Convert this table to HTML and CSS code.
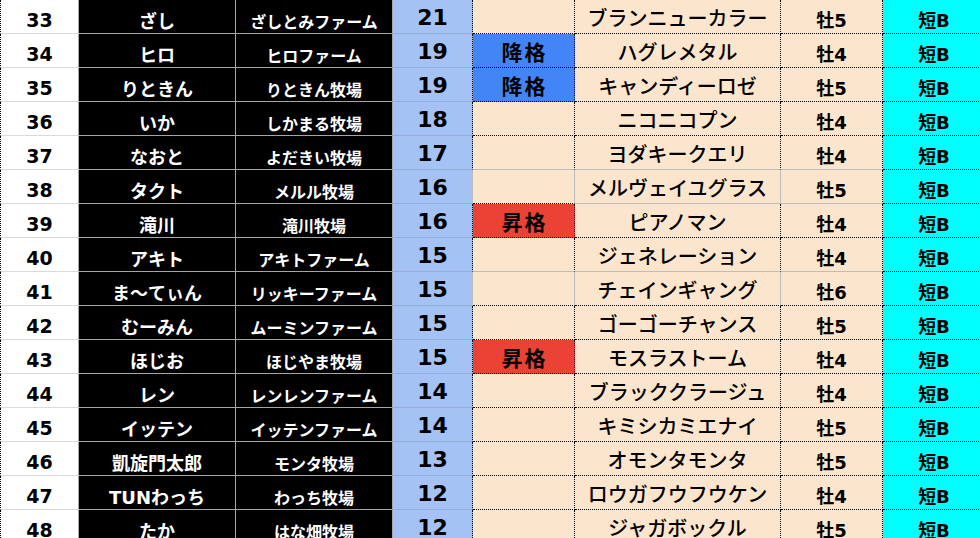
FILE: index.html
```html
<!DOCTYPE html>
<html lang="ja">
<head>
<meta charset="utf-8">
<link rel="stylesheet" href="styles.css">
</head>
<body>
<div class="sheet">
  <div class="row"><div class="c no">33</div><div class="c nm">ざし</div><div class="c fm">ざしとみファーム</div><div class="c sc">21</div><div class="c st"></div><div class="c hs">ブランニューカラー</div><div class="c sx">牡5</div><div class="c cl">短B</div></div>
  <div class="row"><div class="c no">34</div><div class="c nm">ヒロ</div><div class="c fm">ヒロファーム</div><div class="c sc">19</div><div class="c st down">降格</div><div class="c hs">ハグレメタル</div><div class="c sx">牡4</div><div class="c cl">短B</div></div>
  <div class="row"><div class="c no">35</div><div class="c nm">りときん</div><div class="c fm">りときん牧場</div><div class="c sc">19</div><div class="c st down">降格</div><div class="c hs">キャンディーロゼ</div><div class="c sx">牡5</div><div class="c cl">短B</div></div>
  <div class="row"><div class="c no">36</div><div class="c nm">いか</div><div class="c fm">しかまる牧場</div><div class="c sc">18</div><div class="c st"></div><div class="c hs">ニコニコプン</div><div class="c sx">牡4</div><div class="c cl">短B</div></div>
  <div class="row"><div class="c no">37</div><div class="c nm">なおと</div><div class="c fm">よだきい牧場</div><div class="c sc">17</div><div class="c st gb"></div><div class="c hs gb">ヨダキークエリ</div><div class="c sx gb">牡4</div><div class="c cl">短B</div></div>
  <div class="row"><div class="c no">38</div><div class="c nm">タクト</div><div class="c fm">メルル牧場</div><div class="c sc gr">16</div><div class="c st gr"></div><div class="c hs gr gb">メルヴェイユグラス</div><div class="c sx gb">牡5</div><div class="c cl">短B</div></div>
  <div class="row"><div class="c no">39</div><div class="c nm">滝川</div><div class="c fm">滝川牧場</div><div class="c sc">16</div><div class="c st up">昇格</div><div class="c hs">ピアノマン</div><div class="c sx">牡4</div><div class="c cl">短B</div></div>
  <div class="row"><div class="c no">40</div><div class="c nm">アキト</div><div class="c fm">アキトファーム</div><div class="c sc">15</div><div class="c st gb"></div><div class="c hs gb">ジェネレーション</div><div class="c sx gb">牡4</div><div class="c cl">短B</div></div>
  <div class="row"><div class="c no">41</div><div class="c nm">ま～てぃん</div><div class="c fm">リッキーファーム</div><div class="c sc gr">15</div><div class="c st gr"></div><div class="c hs gr">チェインギャング</div><div class="c sx">牡6</div><div class="c cl">短B</div></div>
  <div class="row"><div class="c no">42</div><div class="c nm">むーみん</div><div class="c fm">ムーミンファーム</div><div class="c sc">15</div><div class="c st"></div><div class="c hs">ゴーゴーチャンス</div><div class="c sx">牡5</div><div class="c cl">短B</div></div>
  <div class="row"><div class="c no">43</div><div class="c nm">ほじお</div><div class="c fm">ほじやま牧場</div><div class="c sc">15</div><div class="c st up">昇格</div><div class="c hs">モスラストーム</div><div class="c sx">牡4</div><div class="c cl">短B</div></div>
  <div class="row"><div class="c no">44</div><div class="c nm">レン</div><div class="c fm">レンレンファーム</div><div class="c sc">14</div><div class="c st"></div><div class="c hs">ブラッククラージュ</div><div class="c sx">牡4</div><div class="c cl">短B</div></div>
  <div class="row"><div class="c no">45</div><div class="c nm">イッテン</div><div class="c fm">イッテンファーム</div><div class="c sc">14</div><div class="c st"></div><div class="c hs">キミシカミエナイ</div><div class="c sx">牡5</div><div class="c cl">短B</div></div>
  <div class="row"><div class="c no">46</div><div class="c nm">凱旋門太郎</div><div class="c fm">モンタ牧場</div><div class="c sc">13</div><div class="c st"></div><div class="c hs">オモンタモンタ</div><div class="c sx">牡5</div><div class="c cl">短B</div></div>
  <div class="row"><div class="c no">47</div><div class="c nm">TUNわっち</div><div class="c fm">わっち牧場</div><div class="c sc">12</div><div class="c st"></div><div class="c hs">ロウガフウフウケン</div><div class="c sx">牡4</div><div class="c cl">短B</div></div>
  <div class="row"><div class="c no">48</div><div class="c nm">たか</div><div class="c fm">はな畑牧場</div><div class="c sc">12</div><div class="c st"></div><div class="c hs">ジャガボックル</div><div class="c sx">牡5</div><div class="c cl">短B</div></div>
</div>
</body>
</html>
```
FILE: styles.css
```css
html, body {
  margin: 0;
  padding: 0;
  background: #ffffff;
  overflow: hidden;
}
.sheet {
  width: 980px;
  overflow: hidden;
  font-family: "DejaVu Sans", "Noto Sans CJK JP", sans-serif;
  font-weight: 700;
  color: #000;
}
.row {
  display: grid;
  grid-template-columns: 79px 157px 157px 80px 102px 206px 102px 102px;
  height: 34px;
}
.c {
  box-sizing: border-box;
  height: 34px;
  display: flex;
  align-items: center;
  justify-content: center;
  white-space: nowrap;
  border-right: 1px dotted #000;
  border-bottom: 1px dotted #000;
  background: #fce5cd;
  padding-top: 4px;
}
.no {
  background: #fff;
  border-left: 1px dotted #000;
  border-right: 1px solid #a6a6a6;
  border-bottom: 1px solid #dadada;
  font-size: 19px;
  padding-top: 6px;
}
.nm, .fm {
  background: #000;
  color: #fff;
  border-right: 1px solid #a6a6a6;
  border-bottom: 1px solid #a6a6a6;
}
.nm {
  font-size: 18px;
  padding-top: 6px;
}
.fm {
  font-size: 16px;
  padding-top: 8px;
}
.sc {
  background: #a4c2f4;
  border-bottom: 1px solid #94acd6;
  font-size: 22px;
  padding-top: 1px;
}
.st {
  font-size: 21px;
  letter-spacing: 2px;
  padding-left: 2px;
  padding-top: 0;
}
.down {
  background: #4285f4;
}
.up {
  background: #ea4335;
}
.hs {
  font-family: "Noto Sans CJK JP", sans-serif;
  font-weight: 500;
  font-size: 20px;
  padding-top: 2px;
}
.sx, .cl {
  font-size: 18px;
}
.cl {
  background: #00ffff;
  border-right: none;
}
.gb {
  border-bottom: 1px solid #bdbdbd;
}
.gr {
  border-right: 1px solid #bdbdbd;
}
```
